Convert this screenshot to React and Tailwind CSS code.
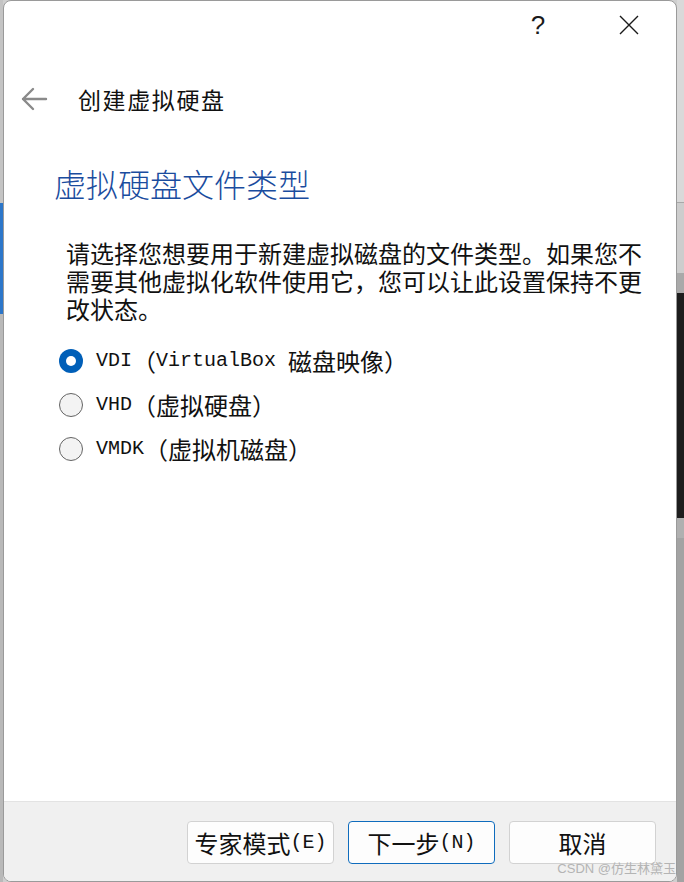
export default function App() {
  const cjk = "font-['Noto_Sans_CJK_SC',sans-serif]";
  const mono = "font-['Liberation_Mono','Noto_Sans_CJK_SC',monospace] text-[20px] whitespace-pre";
  const Radio = ({ checked }) =>
    checked ? (
      <div className="w-[24px] h-[24px] rounded-full bg-[#005fb8] flex items-center justify-center shrink-0">
        <div className="w-[10px] h-[10px] rounded-full bg-white" />
      </div>
    ) : (
      <div className="w-[24px] h-[24px] rounded-full border-[1.5px] border-[#646464] bg-[#f3f3f3] shrink-0" />
    );

  return (
    <div className={`relative flex w-[684px] h-[882px] overflow-hidden bg-[#cfcfcf] ${cjk}`}>
      {/* left background strip */}
      <div className="flex flex-col w-[3px] shrink-0">
        <div className="h-[203px] bg-[#c4c4c4]" />
        <div className="h-[111px] bg-[#2c76c9]" />
        <div className="flex-1 bg-[#b9b9b9]" />
      </div>

      {/* window */}
      <div className="flex flex-col w-[674px] shrink-0 bg-white border border-[#9a9a9a] rounded-t-[8px] rounded-b-[8px] overflow-hidden">
        {/* title bar */}
        <div className="flex items-center justify-end h-[48px] pr-[27px] shrink-0">
          <div className="w-[40px] flex justify-center text-[26px] leading-none text-[#1a1a1a] font-['Liberation_Sans',sans-serif]">?</div>
          <div className="w-[51px]" />
          <div className="w-[40px] flex justify-center">
            <svg width="20" height="20" viewBox="0 0 20 20">
              <path d="M1 1 L19 19 M19 1 L1 19" stroke="#1a1a1a" strokeWidth="1.4" fill="none" />
            </svg>
          </div>
        </div>

        {/* header row */}
        <div className="flex items-center h-[100px] shrink-0">
          <div className="w-[74px] pl-[16px] flex items-center">
            <svg width="28" height="24" viewBox="0 0 28 24">
              <path d="M26 12 H3 M13 2 L3 12 L13 22" stroke="#8a8a8a" strokeWidth="2.4" fill="none" strokeLinecap="round" strokeLinejoin="round" />
            </svg>
          </div>
          <div className="text-[23px] leading-[30px] text-[#111] tracking-[1.6px]">创建虚拟硬盘</div>
        </div>

        {/* content */}
        <div className="flex flex-col flex-1 pt-[14px]">
          <div className="pl-[50px] text-[32px] leading-[40px] text-[#1a4c9e] font-light whitespace-nowrap">虚拟硬盘文件类型</div>

          <div className="pl-[62px] mt-[36px] text-[24px] leading-[28px] text-[#111] whitespace-nowrap">
            <div className="h-[28px]">请选择您想要用于新建虚拟磁盘的文件类型。如果您不</div>
            <div className="h-[28px]">需要其他虚拟化软件使用它，您可以让此设置保持不更</div>
            <div className="h-[28px]">改状态。</div>
          </div>

          <div className="flex flex-col mt-[16px] pl-[55px]">
            <div className="flex items-center h-[44px] gap-[13px] whitespace-nowrap text-[24px] text-[#111]">
              <Radio checked />
              <div className="flex items-center">
                <span className={mono}>VDI</span>
                <span>（</span>
                <span className={mono}>{"VirtualBox "}</span>
                <span>磁盘映像）</span>
              </div>
            </div>
            <div className="flex items-center h-[44px] gap-[13px] whitespace-nowrap text-[24px] text-[#111]">
              <Radio />
              <div className="flex items-center">
                <span className={mono}>VHD</span>
                <span>（虚拟硬盘）</span>
              </div>
            </div>
            <div className="flex items-center h-[44px] gap-[13px] whitespace-nowrap text-[24px] text-[#111]">
              <Radio />
              <div className="flex items-center">
                <span className={mono}>VMDK</span>
                <span>（虚拟机磁盘）</span>
              </div>
            </div>
          </div>
        </div>

        {/* footer */}
        <div className="h-[80px] shrink-0 bg-[#f0f0f0] border-t border-[#e3e3e3] flex justify-end items-start pt-[19px] pr-[20px] gap-[14px]">
          <div className="w-[147px] h-[43px] rounded-[4px] border border-[#d2d2d2] bg-[#fdfdfd] flex items-center justify-center text-[24px] text-[#111] whitespace-nowrap">
            <span>专家模式</span><span className={mono}>(E)</span>
          </div>
          <div className="w-[147px] h-[43px] rounded-[4px] border border-[#0f6cbd] bg-[#fdfdfd] flex items-center justify-center text-[24px] text-[#111] whitespace-nowrap">
            <span>下一步</span><span className={mono}>(N)</span>
          </div>
          <div className="w-[147px] h-[43px] rounded-[4px] border border-[#d2d2d2] bg-[#fdfdfd] flex items-center justify-center text-[24px] text-[#111] whitespace-nowrap">
            取消
          </div>
        </div>
      </div>

      {/* right background strip */}
      <div className="flex flex-col flex-1">
        <div className="h-[202px] bg-[#d9d9d9]" />
        <div className="h-[1px] bg-[#a8a8a8]" />
        <div className="h-[70px] bg-[#cdcdcd]" />
        <div className="h-[20px] bg-[#a9a9a9]" />
        <div className="h-[225px] bg-[#1d1d1d]" />
        <div className="h-[20px] bg-[#b0b0b0]" />
        <div className="flex-1 bg-[#a3a3a3]" />
      </div>

      {/* watermark */}
      <div className="absolute right-[8px] bottom-[5px] text-[13px] leading-[16px] text-[#b4b4b4] whitespace-nowrap">
        <span className="font-['Liberation_Sans',sans-serif]">CSDN @</span>仿生林黛玉
      </div>
    </div>
  );
}
